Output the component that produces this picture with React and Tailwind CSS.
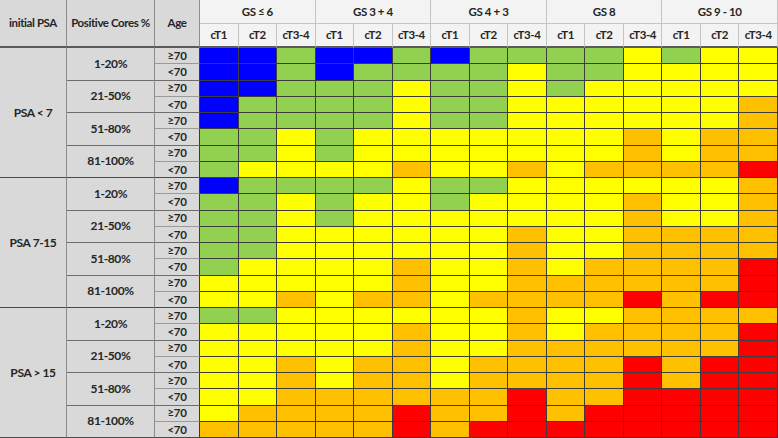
import React from "react";

const fills = {
  B: "bg-[#0000ff]",
  G: "bg-[#92d050]",
  Y: "bg-[#ffff00]",
  O: "bg-[#ffc000]",
  R: "bg-[#ff0000]",
};

// one string per age row, one letter per cT column
const grid = [
  "BBGBBGBGGGGYGYY",
  "BBGBGGGGYGGYYYY",
  "BBGGGYGGYGYYYYY",
  "BGGGGYGGYYYYYYO",
  "BGGGGYGGYYYYYYO",
  "GGYGYYYYYYYOYOO",
  "GGYGYYYYYYYOYOO",
  "GYYYYOYYOYOOOOR",
  "BGGGGYGGYYYYYYO",
  "GGYGYYGYYYYOYYO",
  "GGYGYYYYYYYOYYO",
  "GGYYYYYYOYYOOOO",
  "GGYYYYYYOYYOOOO",
  "GYYYYOYYOYOOOOR",
  "YYYYYOYYOOOOOOR",
  "YYOYOOYOOOORORR",
  "GGYYYYYYOYYOOOO",
  "YYYYYOYYOYOOOOR",
  "YYYYYOYYOOOOOOR",
  "YYOYOOYOOOORORR",
  "YYOYOOYOOOORORR",
  "YYOOOOOOROORRRR",
  "YOOOOROORORRRRR",
  "OOOOORORRRRRRRR",
];

const groups = ["PSA < 7", "PSA 7-15", "PSA > 15"];
const cores = ["1-20%", "21-50%", "51-80%", "81-100%"];
const gs = ["GS ≤ 6", "GS 3 + 4", "GS 4 + 3", "GS 8", "GS 9 - 10"];
const stages = ["cT1", "cT2", "cT3-4"];

const leftCell =
  "bg-[#d9d9d9] flex items-center justify-center border-[#8c8c8c]";

export default function App() {
  const cells = [];

  cells.push(
    <div key="h1" className={`${leftCell} row-span-2 border-r border-b-2 border-b-[#5a5a5a]`}>
      initial PSA
    </div>,
    <div key="h2" className={`${leftCell} row-span-2 border-r border-b-2 border-b-[#5a5a5a]`}>
      Positive Cores %
    </div>,
    <div key="h3" className={`${leftCell} row-span-2 border-r border-b-2 border-b-[#5a5a5a]`}>
      Age
    </div>
  );
  gs.forEach((g) =>
    cells.push(
      <div
        key={g}
        className="col-span-3 bg-[#f3f3f3] flex items-center justify-center border-r border-b border-[#c4c4c4]"
      >
        {g}
      </div>
    )
  );
  gs.forEach((g) =>
    stages.forEach((s) =>
      cells.push(
        <div
          key={g + s}
          className="bg-[#f3f3f3] flex items-center justify-center border-r border-[#c4c4c4] border-b-2 border-b-[#5a5a5a]"
        >
          {s}
        </div>
      )
    )
  );

  grid.forEach((row, r) => {
    const g = Math.floor(r / 8);
    const c = Math.floor(r / 2) % 4;
    if (r % 8 === 0) {
      cells.push(
        <div
          key={"g" + r}
          className={`${leftCell} row-span-8 border-r border-b border-b-[#4a4a4a] text-[12px]`}
        >
          {groups[g]}
        </div>
      );
    }
    if (r % 2 === 0) {
      cells.push(
        <div
          key={"c" + r}
          className={`${leftCell} row-span-2 border-r border-b ${c === 3 ? "border-b-[#4a4a4a]" : "border-b-[#6e6e6e]"} text-[12px]`}
        >
          {cores[c]}
        </div>
      );
    }
    cells.push(
      <div
        key={"a" + r}
        className={`${leftCell} border-r border-r-[#3a3a3a] border-b ${r % 2 === 0 ? "border-b-[#9a9a9a]" : c === 3 ? "border-b-[#4a4a4a]" : "border-b-[#6e6e6e]"}`}
      >
        {r % 2 === 0 ? "≥70" : "<70"}
      </div>
    );
    row.split("").forEach((k, i) =>
      cells.push(
        <div
          key={r + "-" + i}
          className={`${fills[k]} border-r border-b border-[#3c3c3c]`}
        />
      )
    );
  });

  return (
    <div className="w-[778px] h-[438px] bg-white overflow-hidden">
      <div className="w-[778px] h-[438px] grid grid-cols-[67px_88px_45px_repeat(15,minmax(0,1fr))] grid-rows-[24px_24px_repeat(24,minmax(0,1fr))] font-['Lato',sans-serif] font-bold text-[11.5px] tracking-[-0.4px] text-[#262626] leading-none">
        {cells}
      </div>
    </div>
  );
}
